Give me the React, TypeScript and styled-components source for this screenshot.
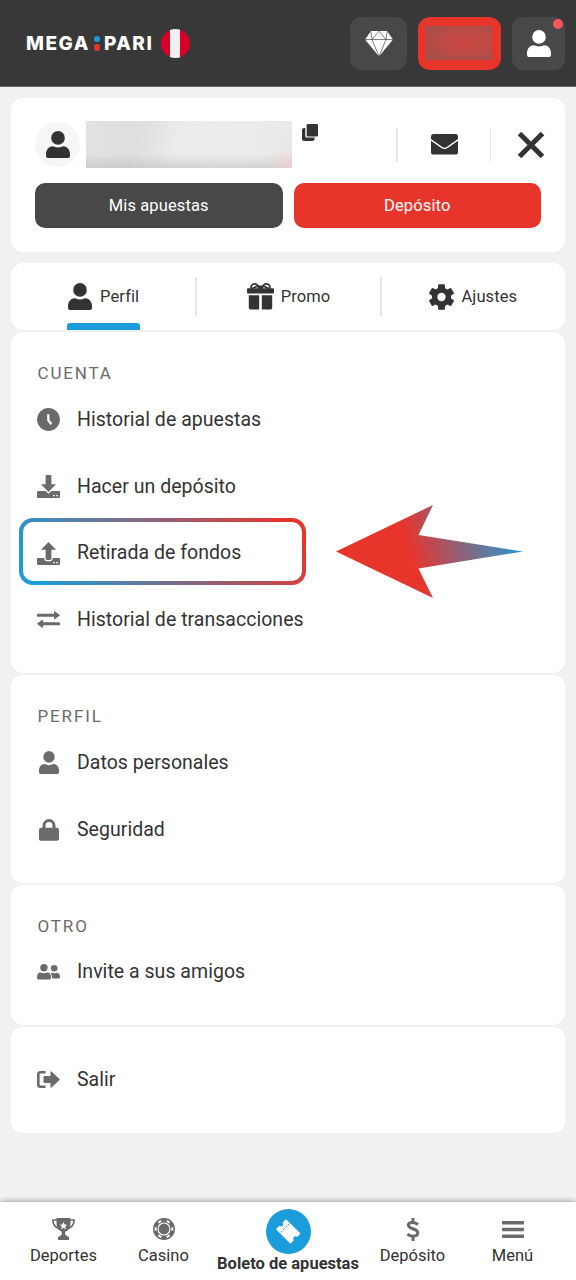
import React from 'react';
import styled, { createGlobalStyle, css } from 'styled-components';

const GlobalStyle = createGlobalStyle`
  * { box-sizing: border-box; }
  body { margin: 0; background: #f1f1f1; font-family: Roboto, "Liberation Sans", sans-serif; color: #333; }
  button { font: inherit; border: 0; padding: 0; margin: 0; background: none; color: inherit; }
  svg { display: block; flex: none; }
`;

const Screen = styled.div`
  width: 576px;
  height: 1280px;
  display: flex;
  flex-direction: column;
  overflow: hidden;
  background: #f1f1f1;
`;

const Header = styled.header`
  height: 87px;
  flex: none;
  display: flex;
  align-items: center;
  gap: 11px;
  padding: 0 11px 0 26px;
  background: #383838;
  border-bottom: 1px solid #666;
`;

const Logo = styled.div`
  flex: 1;
  display: flex;
  align-items: center;
  color: #fff;
  font: 800 19px/28px Inter, sans-serif;
  letter-spacing: 1.5px;
`;

const Word = styled.span<{ $width: number }>`
  width: ${(p) => p.$width}px;
  padding-top: 1px;
`;

const LogoDots = styled.div`
  width: 7px;
  margin: 0 3.5px 0 0;
  display: flex;
  flex-direction: column;
  gap: 2px;
`;

const LogoDot = styled.i<{ $color: string }>`
  width: 6.5px;
  height: 6.5px;
  border-radius: 50%;
  background: ${(p) => p.$color};
`;

const Flag = styled.i`
  width: 29px;
  height: 29px;
  border-radius: 50%;
  background: linear-gradient(90deg, #d80027 9.5px, #f0f0f0 9.5px 19px, #d80027 19px);
`;

const HeaderButton = styled.button<{ $width: number }>`
  position: relative;
  width: ${(p) => p.$width}px;
  height: 53px;
  border-radius: 11px;
  background: #484848;
  color: #fff;
  display: grid;
  place-items: center;
`;

const Balance = styled(HeaderButton)`
  background: #e7352c;
  border-radius: 12px;
`;

const BalanceValue = styled.div`
  width: 66px;
  height: 34px;
  margin: 0 1px 0 0;
  background: radial-gradient(ellipse at 60% 48%, #ce4641 0%, #bb4b46 50%, #96514d 100%);
`;

const Badge = styled.i`
  position: absolute;
  top: 2.5px;
  right: 2.5px;
  width: 10px;
  height: 10px;
  border-radius: 50%;
  background: #ff5558;
`;

const Card = styled.section`
  margin: 0 11px;
  border-radius: 12px;
  background: #fff;
  flex: none;
`;

const AccountCard = styled(Card)`
  height: 154px;
  margin-top: 11px;
  padding: 23px 24px 0;
`;

const AccountRow = styled.div`
  height: 47px;
  display: flex;
  align-items: center;
`;

const Avatar = styled.div`
  width: 45px;
  height: 45px;
  border-radius: 50%;
  background: #f6f6f6;
  display: grid;
  place-items: center;
`;

const AccountName = styled.div`
  width: 206px;
  height: 47px;
  margin: 0 10px 0 6px;
  background:
    radial-gradient(circle at 100% 100%, rgba(245, 205, 205, 0.6), transparent 26px),
    linear-gradient(0deg, rgba(170, 170, 170, 0.38), transparent 14px),
    linear-gradient(100deg, #e2e2e2 0%, #dedede 25%, #ececec 45%, #ededed 75%, #e8e8e8 100%);
`;

const CopyButton = styled.button`
  align-self: flex-start;
  padding-top: 3px;
`;

const Divider = styled.i<{ $height: number }>`
  width: 1.5px;
  height: ${(p) => p.$height}px;
  background: #e6e6e6;
`;

const Actions = styled.div`
  flex: 1;
  display: flex;
  align-items: center;
  justify-content: flex-end;
  margin-right: -4px;
`;

const MailButton = styled.button`
  width: 92px;
  padding-left: 1px;
  display: grid;
  place-items: center;
`;

const CloseButton = styled.button`
  margin-left: 26px;
`;

const Buttons = styled.div`
  display: grid;
  grid-template-columns: 1fr 1fr;
  gap: 11px;
  margin-top: 15px;
`;

const PillButton = styled.button<{ $bg: string }>`
  height: 45px;
  border-radius: 10px;
  background: ${(p) => p.$bg};
  color: #fff;
  font-size: 16.5px;
  letter-spacing: 0.12px;
`;

const Tabs = styled(Card)`
  height: 67px;
  margin-top: 11px;
  padding-left: 1px;
  display: flex;
  align-items: center;
`;

const Tab = styled.button<{ $active?: boolean }>`
  flex: 1;
  height: 100%;
  display: flex;
  justify-content: center;

  > span {
    position: relative;
    display: flex;
    align-items: center;
    gap: ${(p) => (p.$active ? 8 : 7)}px;
    padding: 0 1px;
    font-size: 16.5px;
    letter-spacing: 0.1px;
  }

  ${(p) =>
    p.$active &&
    css`
      > span::after {
        content: '';
        position: absolute;
        inset: auto 0 0 0;
        height: 7px;
        border-radius: 3px 3px 0 0;
        background: #1b9ddb;
      }
    `}
`;

const Section = styled(Card)<{ $height: number; $top: number }>`
  height: ${(p) => p.$height}px;
  margin-top: ${(p) => p.$top}px;
`;

const SectionTitle = styled.h2`
  margin: 0;
  height: 54px;
  padding: 31px 0 0 26.5px;
  font-size: 17px;
  line-height: 20px;
  font-weight: 400;
  letter-spacing: 1.85px;
  color: #6a6a6a;
`;

const List = styled.ul<{ $pad?: number }>`
  list-style: none;
  margin: 0;
  padding: ${(p) => p.$pad ?? 0}px 0 0;
`;

const Item = styled.li`
  position: relative;
  z-index: 0;
  height: 66.7px;
  padding-left: 26px;
  display: flex;
  align-items: center;
  font-size: 19.5px;
  letter-spacing: 0.03px;
`;

const ItemIcon = styled.span`
  width: 23px;
  margin: 1px 17px 0 0;
  color: #6a6a6a;
  display: grid;
  place-items: center;
`;

const Highlight = styled.div`
  position: absolute;
  z-index: -1;
  left: 8px;
  top: -1.4px;
  width: 287px;
  height: 67px;
  border: 4px solid transparent;
  border-radius: 14px;
  background:
    linear-gradient(#fff, #fff) padding-box,
    linear-gradient(to right, rgba(27, 157, 219, 0), rgba(231, 53, 44, 0)) border-box,
    linear-gradient(52deg, #1b9ddb 6%, #e7352c 94%) border-box;
`;

const Pointer = styled.svg`
  position: absolute;
  left: 325px;
  top: -14.4px;
`;

const BottomNav = styled.nav`
  height: 78px;
  flex: none;
  margin-top: auto;
  padding: 0 13.5px;
  display: flex;
  background: #fff;
  box-shadow: 0 0 6px rgba(0, 0, 0, 0.45);
`;

const NavItem = styled.a<{ $main?: boolean }>`
  flex: none;
  width: ${(p) => (p.$main ? 149 : 100)}px;
  display: flex;
  flex-direction: column;
  align-items: center;
  padding-top: ${(p) => (p.$main ? 7 : 14)}px;
  font-size: 16.5px;
  line-height: 20px;
  font-weight: ${(p) => (p.$main ? 700 : 400)};
  white-space: nowrap;
`;

const NavIcon = styled.span<{ $main?: boolean }>`
  width: ${(p) => (p.$main ? 45 : 26)}px;
  height: ${(p) => (p.$main ? 45 : 26)}px;
  margin-bottom: ${(p) => (p.$main ? 0 : 4)}px;
  border-radius: 50%;
  display: grid;
  place-items: center;
  color: ${(p) => (p.$main ? '#fff' : '#6a6a6a')};
  background: ${(p) => (p.$main ? '#1b9ddb' : 'none')};
`;

const PersonIcon = ({ w = 24, h = 27 }: { w?: number; h?: number }) => (
  <svg width={w} height={h} viewBox="0 0 24 27" fill="currentColor" preserveAspectRatio="none">
    <circle cx="12" cy="6.9" r="6.8" />
    <path d="M0 23.500C0 19 2.5 15.3 6.5 15.3C8.2 15.3 9.5 16.6 12 16.6S15.8 15.3 17.5 15.3C21.5 15.3 24 19 24 23.500V25Q24 27 22 27H2Q0 27 0 25Z" />
  </svg>
);

const DiamondIcon = () => (
  <svg width="28" height="25" viewBox="0 0 28 25" fill="#fff" stroke="#484848" strokeWidth=".7" strokeLinejoin="round">
    <path stroke="none" d="M6 0H22L28 8.5L14.8 24.5H13.2L0 8.5Z" />
    <path fill="none" d="M0 8.5H28M7 8.5L14 .2L21 8.5L14.4 24.5H13.6L7 8.5L5.8 .5M21 8.5L22.2 .5" />
  </svg>
);

const CopyIcon = () => (
  <svg width="16" height="17" viewBox="0 0 16 17" fill="#333">
    <path d="M3.3 4H2Q0 4 0 6V15Q0 17 2 17H10.5Q12.7 17 12.7 14.6V13.6H5Q3.3 13.6 3.3 12Z" />
    <rect x="4.7" width="11.3" height="12.4" rx="1.2" />
  </svg>
);

const MailIcon = () => (
  <svg width="27" height="21" viewBox="0 0 27 21" fill="#333">
    <path d="M2.5 0H24.5Q27 0 27 2.5V5L16 12.8Q13.5 14.5 11 12.8L0 5V2.5Q0 0 2.5 0Z" />
    <path d="M0 6.8L10.3 14Q13.5 16.2 16.7 14L27 6.8V18Q27 20.6 24.5 20.6H2.5Q0 20.6 0 18Z" />
  </svg>
);

const CloseIcon = () => (
  <svg width="28" height="28" viewBox="0 0 28 28" stroke="#333" strokeWidth="5">
    <path d="M2.500 2.500L25.500 25.500M25.500 2.500L2.500 25.500" />
  </svg>
);

const GiftIcon = () => (
  <svg width="27" height="27" viewBox="0 0 27 27" fill="#333">
    <path fill="none" stroke="#333" strokeWidth="1.7" d="M12.500 4.800C10.500 1.500 9 .9 7.500 .9C5 .9 3.800 3 4 5.500M14.500 4.800C16.500 1.500 18 .9 19.500 .9C22 .9 23.200 3 23 5.500M4.500 5.600C7 5.200 8.500 3.200 11.500 3.400M22.500 5.600C20 5.200 18.500 3.200 15.500 3.400" />
    <rect x="11" y="2.500" width="5" height="3.500" rx="1.500" />
    <rect y="5.200" width="27" height="5.200" rx="1" />
    <path d="M1.800 12.200H12.200V26.500H3.500Q1.800 26.500 1.800 24.800ZM14.800 12.200H25.200V24.800Q25.200 26.500 23.500 26.500H14.800Z" />
  </svg>
);

const GearIcon = () => (
  <svg width="25" height="26" viewBox="0 0 25 26">
    <circle cx="12.500" cy="13" r="6.900" fill="none" stroke="#333" strokeWidth="5.400" />
    <g fill="#333">
      {[0, 60, 120, 180, 240, 300].map((angle) => (
        <path key={angle} transform={`rotate(${angle} 12.500 13)`} d="M9.200 .8Q9.200 .2 10 .2H15Q15.800 .2 15.800 .8L16.300 5.500H8.700Z" />
      ))}
    </g>
  </svg>
);

const ClockIcon = () => (
  <svg width="23" height="23" viewBox="0 0 23 23">
    <circle cx="11.500" cy="11.500" r="11.400" fill="currentColor" />
    <path d="M11.300 6.200V12.200L14.400 16.200" fill="none" stroke="#fff" strokeWidth="2.300" />
  </svg>
);

const TrayIcon = ({ up }: { up?: boolean }) => (
  <svg width="23" height="23" viewBox="0 0 23 23" fill="currentColor">
    {up ? (
      <path d="M11.500 0L19 7.700H14.400V16.500Q14.400 18 12.900 18H10.100Q8.600 18 8.600 16.500V7.700H4Z" />
    ) : (
      <path d="M8.600 1Q8.600 0 9.600 0H13.400Q14.400 0 14.400 1V9.200H19L11.500 17L4 9.200H8.600Z" />
    )}
    <path
      fillRule="evenodd"
      d={`${up ? 'M1 16H7.400V17.500Q7.800 19.200 10 19.200H13Q15.200 19.200 15.600 17.500V16H22' : 'M1 16H8.600L11.500 18.800L14.400 16H22'}Q23 16 23 17V22Q23 23 22 23H1Q0 23 0 22V17Q0 16 1 16ZM16 20.600A.9.9 0 1 0 17.800 20.600A.9.9 0 1 0 16 20.600ZM19.200 20.600A.9.9 0 1 0 21 20.600A.9.9 0 1 0 19.200 20.600Z`}
    />
  </svg>
);

const TransferIcon = () => (
  <svg width="23" height="17" viewBox="0 0 23 17" fill="currentColor">
    <path d="M.8 2.800H17V.8Q17 -.2 17.900 .4L22.600 3.700Q23 4.200 22.600 4.700L17.900 8Q17 8.600 17 7.600V5.700H.8Q0 5.700 0 4.900V3.600Q0 2.800 .8 2.800Z" />
    <path d="M22.200 11.300H6V9.400Q6 8.400 5.100 9L.4 12.300Q0 12.800 .4 13.300L5.100 16.600Q6 17.200 6 16.200V14.200H22.200Q23 14.200 23 13.400V12.100Q23 11.300 22.200 11.300Z" />
  </svg>
);

const LockIcon = () => (
  <svg width="20" height="22" viewBox="0 0 20 22">
    <path d="M5 10V6.500A5 5 0 0 1 15 6.500V10" fill="none" stroke="currentColor" strokeWidth="3" />
    <rect y="8.800" width="20" height="13" rx="2" fill="currentColor" />
  </svg>
);

const FriendsIcon = () => (
  <svg width="23" height="16" viewBox="0 0 23 16" fill="currentColor">
    <circle cx="6.900" cy="3.700" r="3.700" />
    <path d="M0 13.500Q0 8.500 3.500 8.500Q5.200 9.200 6.900 9.200T10.300 8.500Q14 8.500 14 13.500Q14 15.600 12.500 15.600H1.500Q0 15.600 0 13.500Z" />
    <circle cx="17.200" cy="4.200" r="3.300" />
    <path d="M13.500 8.900Q15 8.300 17.200 9.200Q18.800 9.200 20 8.700Q23 9.200 23 13Q23 14.600 21.600 14.600H15.200Q15.300 11 13.500 8.900Z" />
  </svg>
);

const ExitIcon = () => (
  <svg width="23" height="17" viewBox="0 0 23 17">
    <path d="M8.500 1.300H3.500Q1.300 1.300 1.300 3.500V13.500Q1.300 15.700 3.500 15.700H8.500" fill="none" stroke="currentColor" strokeWidth="2.600" />
    <path d="M7.500 5H13.500V.8Q13.500 -.3 14.500 .5L22.600 7.900Q23 8.500 22.600 9.100L14.500 16.500Q13.500 17.200 13.500 16V12H7.500Q6.500 12 6.500 11V6Q6.500 5 7.500 5Z" fill="currentColor" />
  </svg>
);

const TrophyIcon = () => (
  <svg width="23" height="22" viewBox="0 0 23 22" fill="currentColor">
    <path fill="none" stroke="currentColor" strokeWidth="1.700" d="M5 2H.9Q.9 8.500 7 10.500M18 2H22.100Q22.100 8.500 16 10.500" />
    <path d="M4.500 0H18.500V5Q18.500 12 13.200 13.700V16.200Q14 18 17 19V22H6V19Q9 18 9.800 16.200V13.700Q4.500 12 4.500 5Z" />
    <path fill="#fff" d="M11.500 4L12.600 6.600L15.300 6.800L13.200 8.600L13.900 11.300L11.500 9.800L9.100 11.300L9.800 8.600L7.700 6.800L10.400 6.600Z" />
  </svg>
);

const ChipIcon = () => (
  <svg width="22" height="22" viewBox="0 0 22 22">
    <circle cx="11" cy="11" r="11" fill="currentColor" />
    <g fill="#fff">
      {[30, 90, 150, 210, 270, 330].map((angle) => (
        <rect key={angle} x="9.300" y="1.600" width="3.400" height="2" transform={`rotate(${angle} 11 11)`} />
      ))}
    </g>
    <circle cx="11" cy="11" r="6" fill="none" stroke="#fff" strokeWidth="1.100" />
  </svg>
);

const TicketIcon = () => (
  <svg width="27" height="27" viewBox="0 0 27 27">
    <g transform="rotate(45 13.500 13.500)">
      <path fill="#fff" d="M3 6.500H23.500V11.300A2.300 2.300 0 0 0 23.500 15.900V20.700H3V15.900A2.300 2.300 0 0 0 3 11.300Z" />
      <path d="M8.600 7.500V20.700" stroke="#1b9ddb" strokeWidth=".9" strokeDasharray="2.200 1.100" />
    </g>
  </svg>
);

const DollarIcon = () => (
  <svg width="14" height="23" viewBox="0 0 14 23" fill="none" stroke="currentColor" strokeWidth="3">
    <path d="M12 6.600Q9.500 4.600 6.500 4.600Q2.400 4.600 2.400 7.300C2.400 11.500 11.800 10 11.800 14.800Q11.800 18.200 7 18.200Q3.800 18.200 1.300 16.200M7 0V5M7 18V23" />
  </svg>
);

const MenuIcon = () => (
  <svg width="22" height="17" viewBox="0 0 22 17" fill="currentColor">
    <rect width="22" height="3.600" rx=".8" />
    <rect y="6.700" width="22" height="3.600" rx=".8" />
    <rect y="13.400" width="22" height="3.600" rx=".8" />
  </svg>
);

const MenuRow = ({ icon, label, children }: { icon: React.ReactNode; label: string; children?: React.ReactNode }) => (
  <Item>
    {children}
    <ItemIcon>{icon}</ItemIcon>
    <span>{label}</span>
  </Item>
);

export default function App() {
  return (
    <Screen>
      <GlobalStyle />
      <Header>
        <Logo>
          <Word $width={67.5}>MEGA</Word>
          <LogoDots>
            <LogoDot $color="#1b9ddb" />
            <LogoDot $color="#e7352c" />
          </LogoDots>
          <Word $width={56.5}>PARI</Word>
          <Flag />
        </Logo>
        <HeaderButton $width={57} aria-label="VIP"><DiamondIcon /></HeaderButton>
        <Balance $width={83} aria-label="Saldo"><BalanceValue /></Balance>
        <HeaderButton $width={53} aria-label="Cuenta">
          <PersonIcon />
          <Badge />
        </HeaderButton>
      </Header>

      <AccountCard>
        <AccountRow>
          <Avatar><PersonIcon /></Avatar>
          <AccountName />
          <CopyButton aria-label="Copiar"><CopyIcon /></CopyButton>
          <Actions>
            <Divider $height={34} />
            <MailButton aria-label="Mensajes"><MailIcon /></MailButton>
            <Divider $height={34} />
            <CloseButton aria-label="Cerrar"><CloseIcon /></CloseButton>
          </Actions>
        </AccountRow>
        <Buttons>
          <PillButton $bg="#484848">Mis apuestas</PillButton>
          <PillButton $bg="#e7352c">Depósito</PillButton>
        </Buttons>
      </AccountCard>

      <Tabs>
        <Tab $active><span><PersonIcon />Perfil</span></Tab>
        <Divider $height={39} />
        <Tab><span><GiftIcon />Promo</span></Tab>
        <Divider $height={39} />
        <Tab><span><GearIcon />Ajustes</span></Tab>
      </Tabs>

      <Section $top={2} $height={341}>
        <SectionTitle>CUENTA</SectionTitle>
        <List>
          <MenuRow icon={<ClockIcon />} label="Historial de apuestas" />
          <MenuRow icon={<TrayIcon />} label="Hacer un depósito" />
          <MenuRow icon={<TrayIcon up />} label="Retirada de fondos">
            <Highlight />
            <Pointer width="188" height="94" viewBox="0 0 188 94">
              <defs>
                <linearGradient id="pointer" gradientUnits="userSpaceOnUse" x1="76" y1="54" x2="184" y2="22">
                  <stop offset="0" stopColor="#e7352c" />
                  <stop offset="1" stopColor="#1b9ddb" />
                </linearGradient>
              </defs>
              <path fill="url(#pointer)" d="M0 46.500L97 0L82.500 30L187 46.500L82.500 63.500L97 93Z" />
            </Pointer>
          </MenuRow>
          <MenuRow icon={<TransferIcon />} label="Historial de transacciones" />
        </List>
      </Section>

      <Section $top={2} $height={208}>
        <SectionTitle>PERFIL</SectionTitle>
        <List>
          <MenuRow icon={<PersonIcon w={20} h={23} />} label="Datos personales" />
          <MenuRow icon={<LockIcon />} label="Seguridad" />
        </List>
      </Section>

      <Section $top={1.5} $height={140.5}>
        <SectionTitle>OTRO</SectionTitle>
        <List>
          <MenuRow icon={<FriendsIcon />} label="Invite a sus amigos" />
        </List>
      </Section>

      <Section $top={2} $height={106}>
        <List $pad={19}>
          <MenuRow icon={<ExitIcon />} label="Salir" />
        </List>
      </Section>

      <BottomNav>
        <NavItem><NavIcon><TrophyIcon /></NavIcon>Deportes</NavItem>
        <NavItem><NavIcon><ChipIcon /></NavIcon>Casino</NavItem>
        <NavItem $main><NavIcon $main><TicketIcon /></NavIcon>Boleto de apuestas</NavItem>
        <NavItem><NavIcon><DollarIcon /></NavIcon>Depósito</NavItem>
        <NavItem><NavIcon><MenuIcon /></NavIcon>Menú</NavItem>
      </BottomNav>
    </Screen>
  );
}
